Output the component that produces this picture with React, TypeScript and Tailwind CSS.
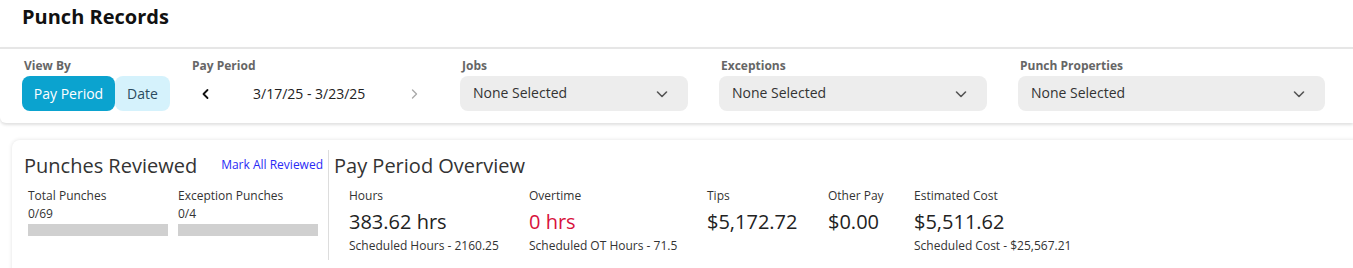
import React from "react";

const font = { fontFamily: '"Open Sans", "Noto Sans", sans-serif' };

function ChevronDown() {
  return (
    <svg width="14" height="14" viewBox="0 0 14 14" fill="none" stroke="#555" strokeWidth="1.6" strokeLinecap="round" strokeLinejoin="round">
      <path d="M2.5 5l4.5 4.5L11.5 5" />
    </svg>
  );
}

function Dropdown({ label, width }: { label: string; width: string }) {
  return (
    <div className="flex flex-col">
      <div className="text-[12px] leading-4 font-bold text-[#666] pl-[2px]">{label}</div>
      <div className={`mt-[2px] h-[35px] ${width} rounded-lg bg-[#ededed] flex items-center justify-between pl-[13px] pr-[19px]`}>
        <span className="text-[14px] text-[#333] -mt-[2px]">None Selected</span>
        <ChevronDown />
      </div>
    </div>
  );
}

function Stat({ label, value, sub, width, red }: { label: string; value: string; sub?: string; width: string; red?: boolean }) {
  return (
    <div className={`${width} flex flex-col shrink-0`}>
      <div className="text-[12px] leading-4 text-[#333]">{label}</div>
      <div className={`mt-[4px] text-[20px] leading-[28px] ${red ? "text-[#d8123c]" : "text-[#222]"}`}>{value}</div>
      <div className="mt-[2px] text-[12px] leading-4 text-[#333] whitespace-nowrap">{sub ?? "\u00a0"}</div>
    </div>
  );
}

export default function App() {
  return (
    <div className="w-[1353px] h-[268px] overflow-hidden bg-white" style={font}>
      <div className="h-[47px] pl-[22px] pt-[4px]">
        <h1 className="text-[20px] leading-[26px] font-bold text-[#111]">Punch Records</h1>
      </div>
      <div className="border-t-2 border-[#e6e6e6] rounded-bl-md shadow-[0_2px_3px_rgba(0,0,0,0.12)] pt-[9px] pb-[12px] pl-[22px] flex">
        <div className="flex flex-col w-[170px]">
          <div className="text-[12px] leading-4 font-bold text-[#666] pl-[2px]">View By</div>
          <div className="mt-[2px] flex h-[35px]">
            <div className="h-full w-[93px] rounded-lg bg-[#0ba3cf] text-white text-[14px] flex items-center justify-center">Pay Period</div>
            <div className="h-full w-[55px] rounded-lg bg-[#d5f2fc] text-[#2b4b60] text-[14px] flex items-center justify-center">Date</div>
          </div>
        </div>
        <div className="flex flex-col w-[268px]">
          <div className="text-[12px] leading-4 font-bold text-[#666]">Pay Period</div>
          <div className="mt-[2px] h-[35px] flex items-center">
            <svg width="10" height="12" viewBox="0 0 10 12" className="ml-[9px]" fill="none" stroke="#111" strokeWidth="1.8" strokeLinecap="round" strokeLinejoin="round">
              <path d="M6.5 2L2.5 6l4 4" />
            </svg>
            <span className="ml-[42px] text-[14px] text-[#222] -mt-[1px]">3/17/25 - 3/23/25</span>
            <svg width="10" height="12" viewBox="0 0 10 12" className="ml-[44px]" fill="none" stroke="#aaa" strokeWidth="1.4" strokeLinecap="round" strokeLinejoin="round">
              <path d="M3.5 2l4 4-4 4" />
            </svg>
          </div>
        </div>
        <div className="flex gap-[31px]">
          <Dropdown label="Jobs" width="w-[228px]" />
          <Dropdown label="Exceptions" width="w-[268px]" />
          <Dropdown label="Punch Properties" width="w-[307px]" />
        </div>
      </div>
      <div className="mt-[17px] ml-[12px] w-[1360px] h-[140px] rounded-lg bg-white shadow-[0_0_4px_rgba(0,0,0,0.12)] flex">
        <div className="w-[316px] pl-[12px] pr-[5px] pt-[12px]">
          <div className="flex items-center justify-between">
            <div className="text-[20px] leading-[28px] text-[#333]">Punches Reviewed</div>
            <div className="text-[12px] leading-4 text-[#2a2af5] -mt-[2px]">Mark All Reviewed</div>
          </div>
          <div className="mt-[8px] flex gap-[10px] pl-[4px]">
            {[
              ["Total Punches", "0/69"],
              ["Exception Punches", "0/4"],
            ].map(([l, v]) => (
              <div key={l} className="w-[140px] flex flex-col">
                <div className="text-[12px] leading-4 text-[#333]">{l}</div>
                <div className="mt-[2px] text-[12px] leading-4 text-[#333]">{v}</div>
                <div className="mt-[2px] h-[12px] bg-[#d0d0d0]" />
              </div>
            ))}
          </div>
        </div>
        <div className="w-px bg-[#ddd] h-[110px] mt-[10px]" />
        <div className="pl-[5px] pt-[12px] flex flex-col">
          <div className="text-[20px] leading-[28px] text-[#333]">Pay Period Overview</div>
          <div className="mt-[8px] pl-[15px] flex">
            <Stat label="Hours" value="383.62 hrs" sub="Scheduled Hours - 2160.25" width="w-[180px]" />
            <Stat label="Overtime" value="0 hrs" sub="Scheduled OT Hours - 71.5" width="w-[178px]" red />
            <Stat label="Tips" value="$5,172.72" width="w-[121px]" />
            <Stat label="Other Pay" value="$0.00" width="w-[86px]" />
            <Stat label="Estimated Cost" value="$5,511.62" sub="Scheduled Cost - $25,567.21" width="w-[200px]" />
          </div>
        </div>
      </div>
    </div>
  );
}
